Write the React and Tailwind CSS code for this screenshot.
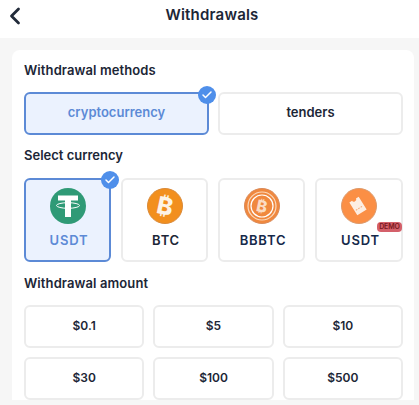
import { ChevronLeft, Check } from "lucide-react";

const amounts = ["$0.1", "$5", "$10", "$30", "$100", "$500"];

function CheckBadge({ className }) {
  return (
    <span className={`absolute flex h-[18px] w-[18px] items-center justify-center rounded-full bg-[#4f8fea] ${className}`}>
      <Check size={12} strokeWidth={3} className="text-white" />
    </span>
  );
}

function TetherIcon() {
  return (
    <svg viewBox="0 0 36 36" className="h-9 w-9">
      <circle cx="18" cy="18" r="18" fill="#2f9a76" />
      <path d="M8 7.5h20v5h-7v16.5h-6v-16.5H8z" fill="#fff" />
      <ellipse cx="18" cy="17.5" rx="11.5" ry="2.8" fill="none" stroke="#fff" strokeWidth="1" />
    </svg>
  );
}

function BtcIcon() {
  return (
    <svg viewBox="0 0 36 36" className="h-9 w-9">
      <circle cx="18" cy="18" r="17.5" fill="#f28f1e" stroke="#d98a3a" />
      <text x="18" y="26.5" textAnchor="middle" transform="rotate(12 18 18)" fontSize="24" fontWeight="800" fill="#fdf3e6" fontFamily="Inter, sans-serif">₿</text>
    </svg>
  );
}

function BbbtcIcon() {
  return (
    <svg viewBox="0 0 36 36" className="h-9 w-9">
      <circle cx="18" cy="18" r="17.5" fill="#f0883e" stroke="#d98a5a" />
      <circle cx="18" cy="18" r="14" fill="none" stroke="#fbd9bd" strokeWidth="1.2" />
      <circle cx="18" cy="18" r="11" fill="none" stroke="#fff" strokeWidth="1.2" />
      <text x="18" y="24" textAnchor="middle" transform="rotate(12 18 18)" fontSize="16" fontWeight="800" fill="#fbdcc4" fontFamily="Inter, sans-serif">₿</text>
    </svg>
  );
}

function TicketIcon() {
  return (
    <svg viewBox="0 0 36 36" className="h-9 w-9">
      <circle cx="18" cy="18" r="17.5" fill="#fb8f45" stroke="#dc9a6c" />
      <g transform="rotate(-32 17 18)">
        <path d="M11.5 10.5h3.2a2.3 2 0 0 0 4.6 0h3.2v15h-11z" fill="#fdeee2" />
        <path d="M13 20.5h8" stroke="#f2a877" strokeWidth="1" strokeDasharray="1.6 1.2" />
      </g>
    </svg>
  );
}

const currencies = [
  { name: "USDT", icon: <TetherIcon />, selected: true },
  { name: "BTC", icon: <BtcIcon /> },
  { name: "BBBTC", icon: <BbbtcIcon />, dark: true },
  { name: "USDT", icon: <TicketIcon />, demo: true, dark: true },
];

export default function App() {
  return (
    <div className="h-[405px] w-[419px] overflow-hidden bg-[#f6f6f6] font-['Inter',sans-serif] text-[#1c2636]">
      {/* Header */}
      <div className="relative flex h-[38px] items-center justify-center bg-white pb-2 pl-[5px]">
        <ChevronLeft size={28} strokeWidth={2.4} className="absolute left-[1px] top-[2px] text-[#222b3a]" />
        <span className="text-[15px] font-semibold tracking-[0.2px]">Withdrawals</span>
      </div>

      <div className="ml-3 mt-3 w-[402px] rounded-t-lg bg-white pl-3 pr-[11px] pt-3">
        <p className="text-[13px] font-semibold leading-4 tracking-[0.1px]">Withdrawal methods</p>

        <div className="mt-[14px] grid grid-cols-2 gap-[9px]">
          <button className="relative h-[43px] rounded-md border-2 border-[#5c8ad6] bg-[#ebf2fe] pb-[2px] text-[13px] font-semibold text-[#5c8ad6]">
            cryptocurrency
            <CheckBadge className="-right-[9px] -top-[8px]" />
          </button>
          <button className="h-[43px] rounded-md border-2 border-[#ececec] bg-white pb-[2px] text-[13px] font-semibold">
            tenders
          </button>
        </div>

        <p className="mt-[12px] text-[13px] font-semibold leading-4">Select currency</p>

        <div className="mt-[15px] grid grid-cols-[87px_87px_87px_88px] gap-[10px]">
          {currencies.map((c, i) => (
            <div
              key={i}
              className={`relative flex h-[84px] flex-col items-center rounded-md border-2 pt-[8px] ${
                c.selected ? "border-[#5c8ad6] bg-[#ebf2fe] text-[#5c8ad6]" : "border-[#ececec] bg-white"
              } ${c.dark ? "text-[#15294a]" : ""}`}
            >
              {c.icon}
              <span className="mt-[8px] pl-[3px] text-[13px] font-semibold leading-4 tracking-[0.8px]">{c.name}</span>
              {c.selected && <CheckBadge className="-right-[10px] -top-[9px]" />}
              {c.demo && (
                <span className="absolute -right-[1px] top-[42px] flex h-[10px] w-[25px] items-center justify-center rounded-[4px] bg-[#d4606a] text-[7px] font-semibold tracking-[-0.1px] text-[#7a1820]">
                  DEMO
                </span>
              )}
            </div>
          ))}
        </div>

        <p className="mt-[13px] text-[13px] font-semibold leading-4 tracking-[0.1px]">Withdrawal amount</p>

        <div className="mt-[14px] grid grid-cols-3 gap-[9px]">
          {amounts.map((a) => (
            <button key={a} className="h-[43px] rounded-md border-2 border-[#ececec] bg-white pb-[2px] text-[12px] font-semibold">
              {a}
            </button>
          ))}
        </div>
      </div>
    </div>
  );
}
